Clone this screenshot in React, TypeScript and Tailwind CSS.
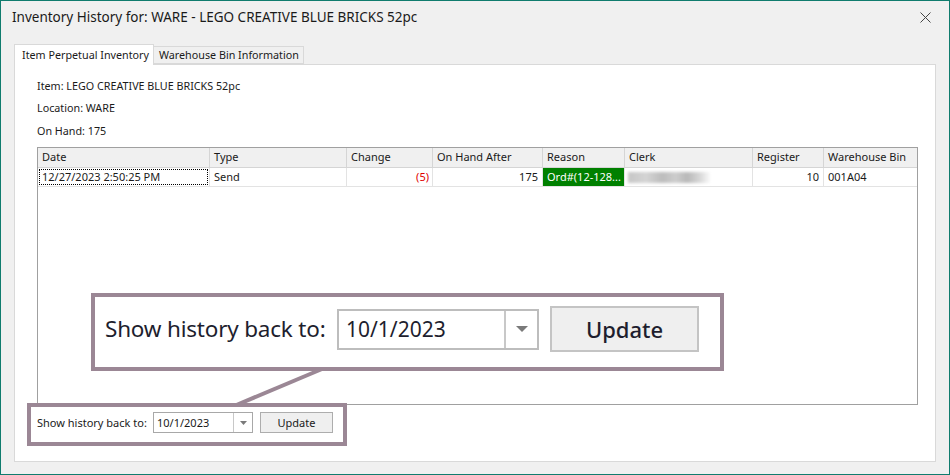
const FONT = "font-['Segoe_UI','Noto_Sans','Open_Sans',sans-serif]";

const cols = [
  { label: "Date", w: "w-[172px]" },
  { label: "Type", w: "w-[137px]" },
  { label: "Change", w: "w-[86px]" },
  { label: "On Hand After", w: "w-[110px]" },
  { label: "Reason", w: "w-[82px]" },
  { label: "Clerk", w: "w-[128px]" },
  { label: "Register", w: "w-[71px]" },
  { label: "Warehouse Bin", w: "flex-1" },
];

function SmallDate() {
  return (
    <div className="flex h-[21px] w-[100px] border border-[#a8a8a8] bg-white">
      <div className="flex-1 pl-[3px] text-[11px] leading-[19px] text-[#1a1a1a]">10/1/2023</div>
      <div className="flex w-[19px] items-center justify-center border-l border-[#c8c8c8]">
        <svg width="7" height="4" viewBox="0 0 7 4">
          <path d="M0 0 L7 0 L3.5 4 Z" fill="#7a7a7a" />
        </svg>
      </div>
    </div>
  );
}

export default function App() {
  return (
    <div className={`relative h-[475px] w-[950px] overflow-hidden border border-[#107c6e] bg-[#f0f0f0] text-[#1a1a1a] ${FONT}`}>
      {/* title bar */}
      <div className="flex h-[32px] items-center justify-between pl-[11px] pr-[18px]">
        <span className="whitespace-nowrap text-[13.5px]">Inventory History for: WARE - LEGO CREATIVE BLUE BRICKS 52pc</span>
        <svg width="11" height="11" viewBox="0 0 11 11">
          <path d="M0.5 0.5 L10.5 10.5 M10.5 0.5 L0.5 10.5" stroke="#444" strokeWidth="1" />
        </svg>
      </div>

      {/* tabs */}
      <div className="ml-[13px] mt-[11px] flex items-end whitespace-nowrap text-[10.75px]">
        <div className="relative z-10 -mb-px flex h-[21px] w-[140px] items-start border border-b-0 border-[#d9d9d9] bg-white pl-[7px] pt-[2px] leading-[16px]">
          Item Perpetual Inventory
        </div>
        <div className="flex h-[18px] w-[150px] items-center border border-l-0 border-[#d9d9d9] bg-[#f0f0f0] pl-[5px]">
          Warehouse Bin Information
        </div>
      </div>

      {/* panel */}
      <div className="ml-[13px] h-[398px] w-[922px] border border-[#d9d9d9] bg-white">
        <div className="pl-[22px] pt-[13px] text-[10.75px] leading-[16px]">
          <p>Item: LEGO CREATIVE BLUE BRICKS 52pc</p>
          <p className="mt-[6px]">Location: WARE</p>
          <p className="mt-[7px]">On Hand: 175</p>
        </div>

        {/* grid */}
        <div className="ml-[22px] mt-[8px] h-[258px] w-[881px] whitespace-nowrap border border-[#a0a0a0] text-[11px]">
          <div className="flex h-[20px] border-b border-[#d5d5d5] bg-[#f0f0f0]">
            {cols.map((c, i) => (
              <div
                key={c.label}
                className={`${c.w} flex items-center pl-[4px] ${i < cols.length - 1 ? "border-r border-[#d5d5d5]" : ""}`}
              >
                {c.label}
              </div>
            ))}
          </div>
          <div className="flex h-[19px] border-b border-[#e3e3e3]">
            <div className="w-[172px] border-r border-[#e3e3e3] p-px">
              <div className="flex h-full items-center border border-dotted border-black pl-[2px]">12/27/2023 2:50:25 PM</div>
            </div>
            <div className="flex w-[137px] items-center border-r border-[#e3e3e3] pl-[4px]">Send</div>
            <div className="flex w-[86px] items-center justify-end border-r border-[#e3e3e3] pr-[3px] text-[#e00000]">(5)</div>
            <div className="flex w-[110px] items-center justify-end border-r border-[#e3e3e3] pr-[4px]">175</div>
            <div className="flex w-[82px] items-center overflow-hidden border-r border-[#e3e3e3] bg-[#008000] pl-[4px] text-white">Ord#(12-128...</div>
            <div className="flex w-[128px] items-center border-r border-[#e3e3e3] pl-[3px]">
              <div className="h-[11px] w-[82px] bg-[linear-gradient(90deg,#c6c6c6_0%,#d4d4d4_22%,#bcbcbc_42%,#cdcdcd_58%,#b8b8b8_72%,#d8d8d8_88%,#fafafa_100%)] blur-[1.5px]" />
            </div>
            <div className="flex w-[71px] items-center justify-end border-r border-[#e3e3e3] pr-[4px]">10</div>
            <div className="flex flex-1 items-center pl-[4px]">001A04</div>
          </div>
        </div>

        {/* history filter (highlighted) */}
        <div className="relative z-10 ml-[12px] -mt-[2px] flex h-[43px] w-[320px] items-start gap-[6px] whitespace-nowrap border-4 border-[#9b8795] bg-white pl-[6px] pt-[5px] text-[11px]">
          <span className="w-[110px] leading-[21px]">Show history back to:</span>
          <SmallDate />
          <button className="ml-px h-[21px] w-[73px] border border-[#adadad] bg-[#efefef] text-[11px] leading-[19px]">Update</button>
        </div>
      </div>

      {/* enlarged callout */}
      <svg className="absolute left-0 top-0" width="950" height="475">
        <line x1="321" y1="368" x2="233" y2="405" stroke="#9b8795" strokeWidth="4" />
      </svg>
      <div className="absolute left-[90px] top-[292px] flex h-[78px] w-[633px] items-center whitespace-nowrap border-4 border-[#9b8795] bg-white pb-[6px] pl-[10px]">
        <span className="w-[232px] text-[22.5px] tracking-[-0.2px] text-[#1e1e2e]">Show history back to:</span>
        <div className="flex h-[41px] w-[202px] border-2 border-[#bdbdbd]">
          <div className="flex-1 pl-[7px] text-[21px] leading-[37px] text-[#1e1e2e]">10/1/2023</div>
          <div className="flex w-[33px] items-center justify-center border-l-2 border-[#c8c8c8]">
            <svg width="12" height="7" viewBox="0 0 12 7">
              <path d="M0 0 L12 0 L6 6 Z" fill="#7a7a7a" />
            </svg>
          </div>
        </div>
        <div className="ml-[11px] flex h-[46px] w-[149px] items-center justify-center border-2 border-[#c4c4c4] bg-[#efefef] text-[22px] font-medium text-[#1e1e2e]">
          Update
        </div>
      </div>
    </div>
  );
}
